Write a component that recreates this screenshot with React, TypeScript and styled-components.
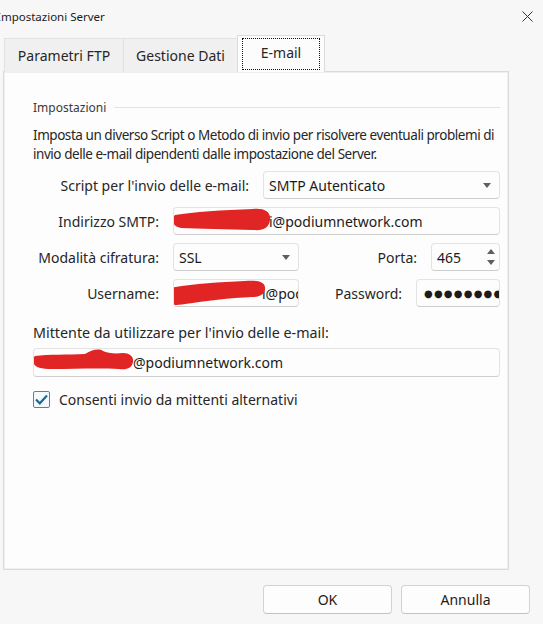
import React from 'react';
import styled, { createGlobalStyle, css } from 'styled-components';

const GlobalStyle = createGlobalStyle`
  html, body {
    margin: 0;
    padding: 0;
    background: #f7f7f7;
  }
  body {
    font-family: "Noto Sans", "Segoe UI", sans-serif;
    color: #1b1b1b;
  }
`;

const Dialog = styled.div`
  width: 543px;
  height: 624px;
  box-sizing: border-box;
  display: flex;
  flex-direction: column;
  overflow: hidden;
  background: #f7f7f7;
`;

const TitleBar = styled.div`
  height: 32px;
  display: flex;
  align-items: center;
  justify-content: space-between;
  padding-right: 9px;
`;

const Title = styled.span`
  font-size: 11.5px;
  margin-left: -3px;
`;

const CloseButton = styled.button`
  border: 0;
  background: transparent;
  padding: 0;
  width: 14px;
  height: 14px;
  display: flex;
  align-items: center;
  justify-content: center;
`;

const TabStrip = styled.div`
  display: flex;
  align-items: flex-end;
  height: 40px;
  padding-left: 4px;
  margin-bottom: -1px;
  position: relative;
  z-index: 1;
`;

const Tab = styled.div<{ $active?: boolean; $width: number }>`
  box-sizing: border-box;
  width: ${p => p.$width}px;
  height: 34px;
  display: flex;
  align-items: center;
  justify-content: center;
  font-size: 14px;
  color: #262626;
  background: #f0f0f0;
  border: 1px solid #e2e2e2;
  border-bottom: 0;
  margin-right: -1px;
  ${p =>
    p.$active &&
    css`
      height: 37px;
      background: #fcfcfc;
      padding: 2px 4px;
      border-color: #dcdcdc;
    `}
`;

const FocusRing = styled.span`
  flex: 1;
  align-self: stretch;
  display: flex;
  align-items: center;
  justify-content: center;
  border: 1px dotted #111;
  padding-bottom: 3px;
`;

const Panel = styled.div`
  flex: 1;
  margin: 0 34px 0 3px;
  box-sizing: border-box;
  background: #fdfdfd;
  border: 1px solid #dadada;
  box-shadow: inset 1px 1px 0 #f0f0f0, inset -1px -1px 0 #f0f0f0;
  padding: 27px 8px 0 29px;
`;

const GroupHeader = styled.div`
  display: flex;
  align-items: center;
  gap: 8px;
  font-size: 12px;
  color: #3a3a3a;
  &::after {
    content: '';
    flex: 1;
    height: 1px;
    background: #e3e3e3;
  }
`;

const Description = styled.p`
  margin: 10px 0 0;
  font-size: 13.5px;
  letter-spacing: -0.45px;
  line-height: 19px;
  color: #262626;
`;

const Form = styled.div`
  display: flex;
  flex-direction: column;
  gap: 8px;
  margin-top: 7px;
`;

const Row = styled.div`
  display: flex;
  align-items: center;
  height: 28px;
`;

const Label = styled.label<{ $width?: number }>`
  font-size: 14px;
  color: #262626;
  text-align: right;
  white-space: nowrap;
  padding-right: 14px;
  ${p => (p.$width ? `width: ${p.$width}px; flex: none;` : 'flex: 1;')}
  box-sizing: border-box;
`;

const fieldBox = css`
  box-sizing: border-box;
  height: 28px;
  background: #fdfdfd;
  border: 1px solid #e3e3e3;
  border-bottom-color: #cdcdcd;
  border-radius: 4px;
  font-size: 14px;
  color: #1b1b1b;
  display: flex;
  align-items: center;
  padding: 0 8px 0 5px;
  white-space: nowrap;
  overflow: hidden;
`;

const Field = styled.div<{ $width?: number }>`
  ${fieldBox}
  ${p => (p.$width ? `width: ${p.$width}px; flex: none;` : 'flex: 1;')}
`;

const Select = styled(Field)`
  justify-content: space-between;
`;

const Spin = styled(Field)`
  justify-content: space-between;
  padding-right: 4px;
`;

const SpinArrows = styled.span`
  display: flex;
  flex-direction: column;
  gap: 6px;
`;

const Dots = styled.span`
  font-size: 10px;
  letter-spacing: 1.2px;
  padding-left: 2px;
  font-family: "DejaVu Sans", sans-serif;
`;

const Hidden = styled.span<{ $width: number }>`
  display: inline-block;
  position: relative;
  width: ${p => p.$width}px;
  height: 18px;
  flex: none;
`;

const Scribble = styled.svg`
  position: absolute;
  overflow: visible;
`;

const FieldLabel = styled.div`
  font-size: 14.3px;
  color: #262626;
  margin-top: 16px;
`;

const Wide = styled(Field)`
  margin-top: 6px;
  height: 29px;
`;

const CheckRow = styled.label`
  display: flex;
  align-items: center;
  gap: 9px;
  margin-top: 13px;
  font-size: 14px;
  color: #262626;
`;

const CheckBox = styled.span`
  width: 17px;
  height: 17px;
  box-sizing: border-box;
  border: 1px solid #4a87ad;
  border-radius: 2px;
  background: #f4f9fc;
  display: flex;
  align-items: center;
  justify-content: center;
`;

const Footer = styled.div`
  display: flex;
  justify-content: flex-end;
  gap: 9px;
  padding: 15px 13px 10px 0;
`;

const Button = styled.button`
  width: 129px;
  height: 29px;
  border: 1px solid #d2d2d2;
  border-bottom-color: #c2c2c2;
  border-radius: 4px;
  background: #fdfdfd;
  font-family: "Noto Sans", "Segoe UI", sans-serif;
  font-size: 14px;
  color: #1b1b1b;
`;

const Arrow = ({ up }: { up?: boolean }) => (
  <svg width="8" height="5" viewBox="0 0 8 5">
    <path d={up ? 'M0 5 L4 0 L8 5 Z' : 'M0 0 L8 0 L4 5 Z'} fill="#5f5f5f" />
  </svg>
);

const RED = '#e12424';

// marker strokes hiding the private part of each address
const SmtpScribble = () => (
  <Scribble width="98" height="22" viewBox="0 0 98 22" style={{ left: -6, top: -3 }}>
    <path
      d="M2 6 C20 3 50 1 80 0 C92 -1 98 3 97 11 C96 19 90 22 80 21 C55 20 25 20 8 19 C2 18 0 15 0 12 C0 9 1 7 2 6 Z"
      fill={RED}
    />
  </Scribble>
);

const UserScribble = () => (
  <Scribble width="106" height="24" viewBox="0 0 106 24" style={{ left: -19, top: -3 }}>
    <path
      d="M3 8 C25 4 55 1 85 0 C95 -1 104 0 105 6 C106 13 100 16 92 16 C70 17 45 20 25 23 C12 25 3 25 1 21 C0 16 0 10 3 8 Z"
      fill={RED}
    />
  </Scribble>
);

const SenderScribble = () => (
  <Scribble width="102" height="22" viewBox="0 0 102 22" style={{ left: -6, top: -5 }}>
    <path
      d="M2 7 C15 5 35 6 52 5 C58 1 66 -1 70 2 C74 4 82 5 90 4 C97 4 101 8 100 13 C99 19 94 21 86 20 C65 19 40 20 20 20 C8 20 2 18 1 15 C0 11 0 8 2 7 Z"
      fill={RED}
    />
  </Scribble>
);

export default function App() {
  return (
    <Dialog>
      <GlobalStyle />
      <TitleBar>
        <Title>Impostazioni Server</Title>
        <CloseButton aria-label="Chiudi">
          <svg width="11" height="11" viewBox="0 0 11 11">
            <path d="M0.5 0.5 L10.5 10.5 M10.5 0.5 L0.5 10.5" stroke="#333" strokeWidth="1" />
          </svg>
        </CloseButton>
      </TitleBar>

      <TabStrip>
        <Tab $width={120}>Parametri FTP</Tab>
        <Tab $width={115}>Gestione Dati</Tab>
        <Tab $width={88} $active>
          <FocusRing>E-mail</FocusRing>
        </Tab>
      </TabStrip>

      <Panel>
        <GroupHeader>Impostazioni</GroupHeader>
        <Description>
          Imposta un diverso Script o Metodo di invio per risolvere eventuali problemi di invio
          delle e-mail dipendenti dalle impostazione del Server.
        </Description>

        <Form>
          <Row>
            <Label $width={230}>Script per l'invio delle e-mail:</Label>
            <Select>
              SMTP Autenticato
              <Arrow />
            </Select>
          </Row>
          <Row>
            <Label $width={140}>Indirizzo SMTP:</Label>
            <Field>
              <Hidden $width={90}>
                <SmtpScribble />
              </Hidden>
              i@podiumnetwork.com
            </Field>
          </Row>
          <Row>
            <Label $width={140}>Modalità cifratura:</Label>
            <Select $width={126}>
              SSL
              <Arrow />
            </Select>
            <Label>Porta:</Label>
            <Spin $width={69}>
              465
              <SpinArrows>
                <Arrow up />
                <Arrow />
              </SpinArrows>
            </Spin>
          </Row>
          <Row>
            <Label $width={140}>Username:</Label>
            <Field $width={126}>
              <Hidden $width={83}>
                <UserScribble />
              </Hidden>
              i@podiumnetwork.com
            </Field>
            <Label>Password:</Label>
            <Field $width={84}>
              <Dots>●●●●●●●●●●●●</Dots>
            </Field>
          </Row>
        </Form>

        <FieldLabel>Mittente da utilizzare per l'invio delle e-mail:</FieldLabel>
        <Wide>
          <Hidden $width={94}>
            <SenderScribble />
          </Hidden>
          @podiumnetwork.com
        </Wide>

        <CheckRow>
          <CheckBox>
            <svg width="13" height="11" viewBox="0 0 13 11">
              <path d="M1 5.5 L4.8 9.3 L12 1.5" fill="none" stroke="#1c6b93" strokeWidth="2.2" />
            </svg>
          </CheckBox>
          Consenti invio da mittenti alternativi
        </CheckRow>
      </Panel>

      <Footer>
        <Button>OK</Button>
        <Button>Annulla</Button>
      </Footer>
    </Dialog>
  );
}
